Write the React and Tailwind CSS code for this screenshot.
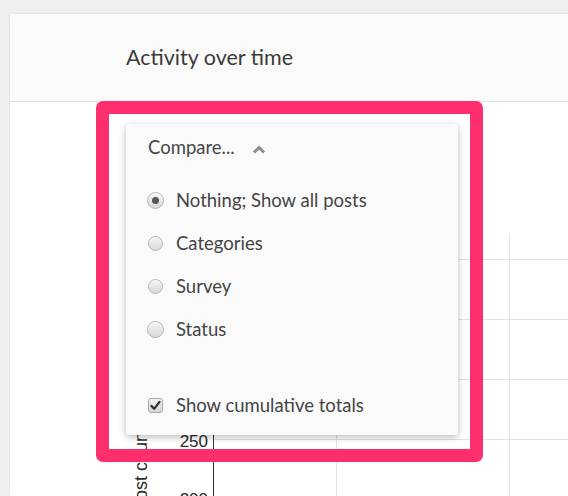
import React from 'react';

const options = [
  { label: 'Nothing; Show all posts', checked: true, size: 'w-[17px] h-[17px]' },
  { label: 'Categories', checked: false, size: 'w-[15px] h-[15px]' },
  { label: 'Survey', checked: false, size: 'w-[15px] h-[15px]' },
  { label: 'Status', checked: false, size: 'w-[17px] h-[17px]' },
];

function Radio({ checked, size }) {
  return (
    <span className="w-[17px] flex items-center justify-center">
      <span
        className={`${size} rounded-full border border-[#b4b4b4] bg-gradient-to-b from-[#f4f4f4] to-[#d9d9d9] shadow-[inset_0_1px_1px_rgba(255,255,255,0.8)] flex items-center justify-center`}
      >
        {checked && <span className="w-[7px] h-[7px] rounded-full bg-[#555]"></span>}
      </span>
    </span>
  );
}

function Chart() {
  // grilla de fondo del gráfico (coordenadas del cuerpo de la tarjeta)
  const rows = [157, 217, 277, 337];
  return (
    <svg width="558" height="394" className="block">
      {rows.map((y) => (
        <line key={y} x1="203" y1={y + 0.5} x2="558" y2={y + 0.5} stroke="#e2e2e2" strokeWidth="1" />
      ))}
      <line x1="326.5" y1="132" x2="326.5" y2="394" stroke="#e2e2e2" strokeWidth="1" />
      <line x1="499.5" y1="132" x2="499.5" y2="394" stroke="#e2e2e2" strokeWidth="1" />
      <line x1="203.5" y1="132" x2="203.5" y2="394" stroke="#333" strokeWidth="1" />
      <text x="198" y="345" textAnchor="end" fontSize="17" fill="#2a2a2a" fontFamily="'Liberation Sans', Arial, sans-serif">250</text>
      <text x="198" y="403" textAnchor="end" fontSize="17" fill="#2a2a2a" fontFamily="'Liberation Sans', Arial, sans-serif">200</text>
      <text
        transform="translate(137, 410) rotate(-90)"
        fontSize="18"
        fill="#2a2a2a"
        fontFamily="'Liberation Sans', Arial, sans-serif"
      >
        Post count
      </text>
    </svg>
  );
}

export default function App() {
  return (
    <div className="w-[568px] h-[496px] overflow-hidden bg-[#efeff1] pl-[10px] pt-[14px] font-['Lato',sans-serif]">
      <div className="relative h-full bg-white shadow-[0_0_2px_rgba(0,0,0,0.12)] rounded-tl-[2px]">
        {/* Header */}
        <div className="h-[88px] bg-[#fafafa] border-b border-[#e3e3e3] flex items-center pl-[116px]">
          <h2 className="text-[21.5px] text-[#3b3b3b]">Activity over time</h2>
        </div>

        {/* Cuerpo con el gráfico */}
        <div className="overflow-hidden">
          <Chart />
        </div>

        {/* Dropdown Compare */}
        <div className="absolute left-[116px] top-[110px] w-[332px] h-[311px] bg-[#fafafa] rounded-[3px] shadow-[0_2px_7px_rgba(0,0,0,0.28)] pl-[21px] flex flex-col">
          <div className="h-[47px] flex items-center pl-[1px]">
            <span className="text-[18.5px] text-[#474747]">Compare...</span>
            <svg width="14" height="9" viewBox="0 0 14 9" className="ml-[17px] mt-[3px]">
              <polyline points="2,7.5 7,2.5 12,7.5" fill="none" stroke="#8c8c8c" strokeWidth="3" strokeLinejoin="miter" />
            </svg>
          </div>

          <div className="mt-2 flex flex-col">
            {options.map((opt) => (
              <div key={opt.label} className="h-[43px] flex items-center gap-[12px]">
                <Radio checked={opt.checked} size={opt.size} />
                <span className="text-[18.5px] text-[#454545]">{opt.label}</span>
              </div>
            ))}
          </div>

          <div className="mt-[33px] h-[43px] flex items-center gap-[12px]">
            <span className="w-[17px] flex items-center justify-center">
              <span className="w-[15px] h-[15px] rounded-[3px] border border-[#a9a9a9] bg-gradient-to-b from-[#f0f0f0] to-[#d6d6d6] flex items-center justify-center">
                <svg width="11" height="11" viewBox="0 0 11 11">
                  <path d="M1.5 6 L4.2 8.8 L9.5 1.8" fill="none" stroke="#2e2e2e" strokeWidth="2.2" strokeLinecap="round" strokeLinejoin="round" />
                </svg>
              </span>
            </span>
            <span className="text-[18.5px] text-[#454545]">Show cumulative totals</span>
          </div>
        </div>

        {/* Marco de anotación */}
        <div className="absolute left-[86px] top-[87px] w-[387px] h-[361px] border-[13px] border-[#ff2e6d] rounded-[7px] pointer-events-none"></div>
      </div>
    </div>
  );
}
